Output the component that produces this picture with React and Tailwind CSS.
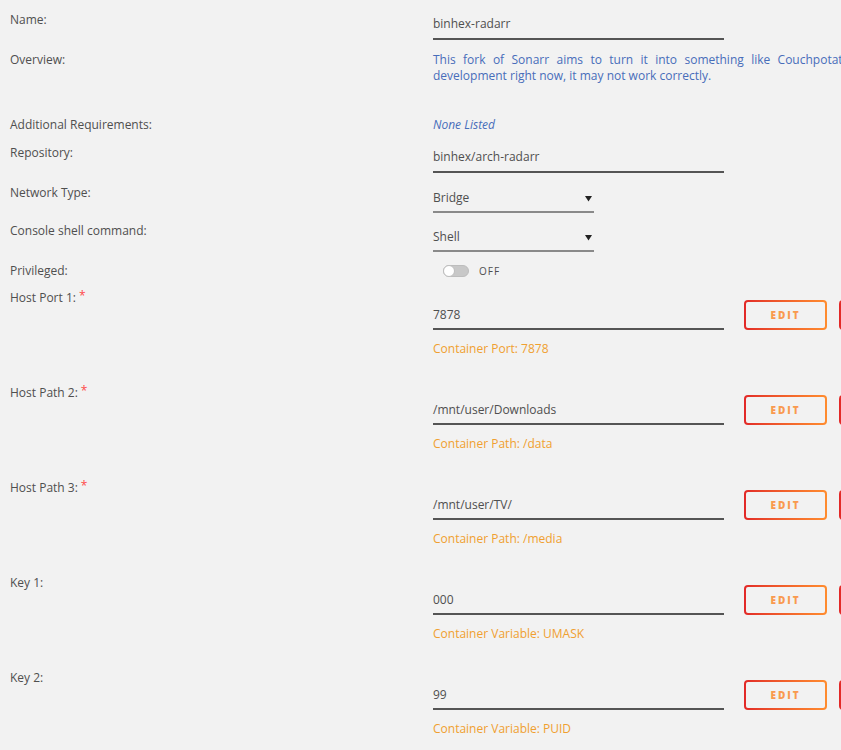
import React from "react";

const font = { fontFamily: '"Open Sans", "Noto Sans", sans-serif' };

function Label({ children, req }) {
  return (
    <div className="w-[433px] shrink-0 pl-[10px] text-[12px] leading-[16px] text-[#4f4f4f]">
      {children}
      {req && <span className="ml-[3px] text-[#ff4a4a] relative top-[-2px]">*</span>}
    </div>
  );
}

function TextInput({ value, pb = "pb-[6px]" }) {
  return (
    <div className={`w-[291px] shrink-0 border-b-2 border-[#555] ${pb} text-[12px] leading-[16px] text-[#4f4f4f]`}>
      {value}
    </div>
  );
}

function Select({ value, mt = "mt-[4px]" }) {
  return (
    <div className={`w-[161px] ${mt} flex items-center justify-between border-b-2 border-[#8a8a8a] pb-[5px] text-[12px] leading-[16px] text-[#4f4f4f]`}>
      <span>{value}</span>
      <svg width="7" height="7" viewBox="0 0 7 7" className="mr-[2px]">
        <path d="M0 1 H7 L3.5 6.5 Z" fill="#222" />
      </svg>
    </div>
  );
}

function Btn({ label }) {
  return (
    <div className="w-[83px] h-[30px] shrink-0 rounded-[4px] p-[2px] bg-linear-to-r from-[#e22828] to-[#ff8c2f]">
      <div className="w-full h-full rounded-[2px] bg-[#f2f2f2] flex items-center justify-center text-[10px] font-extrabold tracking-[2px] text-[#f99a4f]">
        {label}
      </div>
    </div>
  );
}

function ConfigRow({ label, value, desc, first }) {
  return (
    <div className={`flex ${first ? "mt-[11px]" : "mt-[28px]"}`}>
      <Label req={label.req}>{label.text}</Label>
      <div className="pt-[10px] shrink-0">
        <div className="flex items-end">
          <div className="w-[291px] shrink-0 border-b-2 border-[#555] pb-[5px] text-[12px] leading-[16px] text-[#4f4f4f]">
            {value}
          </div>
          <div className="ml-[20px]">
            <Btn label="EDIT" />
          </div>
          <div className="ml-[12px]">
            <Btn label="REMOVE" />
          </div>
        </div>
        <div className="mt-[11px] text-[12px] leading-[16px] text-[#f0a030]">{desc}</div>
      </div>
    </div>
  );
}

export default function App() {
  return (
    <div className="w-[841px] h-[750px] overflow-hidden bg-[#f2f2f2]" style={font}>
      <div className="pt-[12px]">
        {/* Name */}
        <div className="flex">
          <Label>Name:</Label>
          <div className="pt-[4px]">
            <TextInput value="binhex-radarr" />
          </div>
        </div>
        {/* Overview */}
        <div className="flex mt-[12px]">
          <Label>Overview:</Label>
          <div className="shrink-0 text-[12px] leading-[16px] text-[#486dba]">
            <div className="w-[420px] text-justify [text-align-last:justify]">
              This fork of Sonarr aims to turn it into something like Couchpotato.
            </div>
            <div>development right now, it may not work correctly.</div>
          </div>
        </div>
        {/* Additional Requirements */}
        <div className="flex mt-[33px]">
          <Label>Additional Requirements:</Label>
          <div className="text-[12px] leading-[16px] italic text-[#486dba]">None Listed</div>
        </div>
        {/* Repository */}
        <div className="flex mt-[12px]">
          <Label>Repository:</Label>
          <div className="pt-[4px]">
            <TextInput value="binhex/arch-radarr" />
          </div>
        </div>
        {/* Network Type */}
        <div className="flex mt-[12px]">
          <Label>Network Type:</Label>
          <Select value="Bridge" mt="mt-[5px]" />
        </div>
        {/* Console */}
        <div className="flex mt-[10px]">
          <Label>Console shell command:</Label>
          <Select value="Shell" mt="mt-[6px]" />
        </div>
        {/* Privileged */}
        <div className="flex mt-[11px]">
          <Label>Privileged:</Label>
          <div className="flex items-center h-[16px] pl-[10px]">
            <div className="relative w-[26px] h-[12px] rounded-full bg-[#c8c8c8] border border-[#bdbdbd]">
              <div className="absolute left-[-1px] top-[-1px] w-[12px] h-[12px] rounded-full bg-white border border-[#bdbdbd]" />
            </div>
            <span className="ml-[10px] text-[10px] tracking-[1px] text-[#4f4f4f]">OFF</span>
          </div>
        </div>
        <ConfigRow first label={{ text: "Host Port 1:", req: true }} value="7878" desc="Container Port: 7878" />
        <ConfigRow label={{ text: "Host Path 2:", req: true }} value="/mnt/user/Downloads" desc="Container Path: /data" />
        <ConfigRow label={{ text: "Host Path 3:", req: true }} value="/mnt/user/TV/" desc="Container Path: /media" />
        <ConfigRow label={{ text: "Key 1:" }} value="000" desc="Container Variable: UMASK" />
        <ConfigRow label={{ text: "Key 2:" }} value="99" desc="Container Variable: PUID" />
      </div>
    </div>
  );
}
